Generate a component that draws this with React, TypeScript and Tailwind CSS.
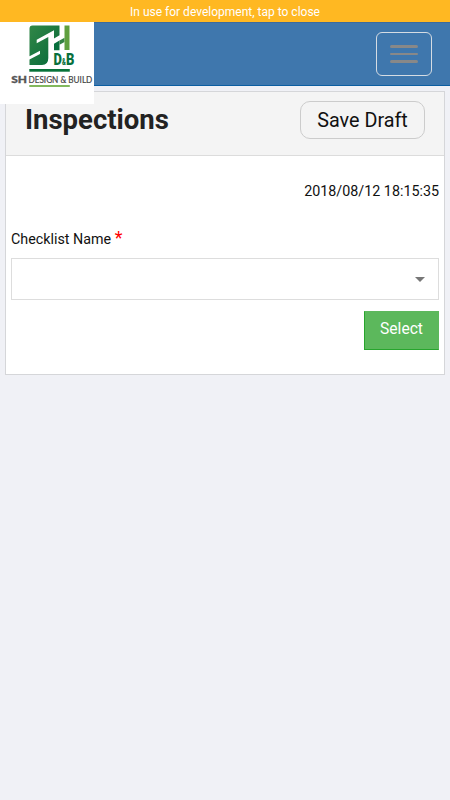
type FieldLabelProps = {
  text: string;
  required?: boolean;
};

function Logo() {
  return (
    <svg
      className="absolute -top-px left-0 z-10 h-[82px] w-[94px] overflow-visible bg-white"
      viewBox="0 22 94 82"
      role="img"
      aria-label="SH Design & Build"
    >
      <defs>
        <linearGradient id="mark" x1="0" y1="0" x2="1" y2="1">
          <stop offset="0" stopColor="#328747" />
          <stop offset="1" stopColor="#056839" />
        </linearGradient>
      </defs>
      <path
        d="M32.5 25.5H59.5V35.3L54 38.5V30.3L36.7 39.7V43.2L48.3 37V58Q48.3 65 42 65H29.5V59.5L40 54V50.8L29.5 56.3V28.5Q29.5 25.5 32.5 25.5Z"
        fill="url(#mark)"
      />
      <path d="M54 43.8L59.5 40.6V50.3H54Z" fill="#08703d" />
      <path d="M59.5 40.6L64.5 37.8V42L59.5 44.8Z" fill="#338143" />
      <path d="M64.5 25.5H69.5V50H64.5Z" fill="#5f9f3f" />
      <g fill="#08703d" fontFamily="Roboto, sans-serif" fontWeight="900">
        <text
          x="53.5"
          y="64.6"
          fontSize="16.5"
          textLength="8.4"
          lengthAdjust="spacingAndGlyphs"
        >
          D
        </text>
        <text
          x="62"
          y="64.6"
          fontSize="8.5"
          textLength="3.9"
          lengthAdjust="spacingAndGlyphs"
        >
          &amp;
        </text>
        <text
          x="66"
          y="64.6"
          fontSize="16.5"
          textLength="8.4"
          lengthAdjust="spacingAndGlyphs"
        >
          B
        </text>
      </g>
      <rect x="29.3" y="69" width="40.5" height="2.7" fill="#087339" />
      <rect x="29.3" y="85" width="40.5" height="2" fill="#82b85d" />
      <text
        x="11.3"
        y="82.6"
        fontFamily="Lato, sans-serif"
        fontSize="9.8"
        fontWeight="900"
        textLength="15.8"
        lengthAdjust="spacingAndGlyphs"
        fill="#555"
        stroke="#555"
        strokeWidth="0.3"
      >
        SH
      </text>
      <text
        x="28.5"
        y="82.6"
        fontFamily="Lato, sans-serif"
        fontSize="9.8"
        textLength="63.8"
        lengthAdjust="spacingAndGlyphs"
        fill="#444"
        stroke="#444"
        strokeWidth="0.2"
      >
        DESIGN &amp; BUILD
      </text>
    </svg>
  );
}

function FieldLabel({ text, required }: FieldLabelProps) {
  return (
    <label className="block h-6 text-[14.3px] leading-6 text-[#111]">
      {text}{" "}
      {required ? <span className="text-[18px] leading-none text-[#f00]">*</span> : null}
    </label>
  );
}

export default function App() {
  return (
    <div className="min-h-screen bg-[#f0f1f6] font-[Roboto,sans-serif] text-[#111]">
      <button
        className="block h-[22px] w-full bg-[#ffb822] pt-[2px] text-center text-[12px] leading-5 text-white"
        type="button"
      >
        In use for development, tap to close
      </button>

      <header className="relative flex h-16 items-start justify-end border-b border-t border-b-[#0b5ea2] border-t-[#3c6b9d] bg-[#3f77ad] pr-[18px] pt-[9px]">
        <Logo />
        <button
          className="flex h-[44px] w-[56px] flex-col items-center justify-center gap-[5px] rounded-[6px] border-[1.5px] border-[#d5dce3]"
          type="button"
          aria-label="Menu"
        >
          <span className="h-[2.5px] w-7 rounded-sm bg-[#888]" />
          <span className="h-[2.5px] w-7 rounded-sm bg-[#888]" />
          <span className="h-[2.5px] w-7 rounded-sm bg-[#888]" />
        </button>
      </header>

      <section className="mx-[5px] mt-[5px] h-[284px] border border-[#d5d6d9] bg-white">
        <div className="flex h-16 items-start justify-between border-b border-[#dcdcdc] bg-[#f4f4f4] px-[19px]">
          <h1 className="pt-[8px] text-[27.5px] font-bold leading-10 text-[#222]">Inspections</h1>
          <button
            className="mt-[9px] h-[38px] w-[125px] rounded-[10px] border border-[#ccc] pt-px text-[19.8px] text-[#111]"
            type="button"
          >
            Save Draft
          </button>
        </div>

        <div className="px-[5px]">
          <p className="pt-[25px] text-right text-[14.3px] leading-5">2018/08/12 18:15:35</p>
          <div className="mt-[26px]">
            <FieldLabel text="Checklist Name" required />
          </div>
          <div
            className="mt-[7px] flex h-[42px] items-center justify-end border border-[#ddd] pr-[13px]"
            role="combobox"
          >
            <svg className="h-[5px] w-[10px]" viewBox="0 0 10 5">
              <path d="M0 0H10L5 5Z" fill="#777" />
            </svg>
          </div>
          <div className="mt-[11px] flex justify-end">
            <button
              className="h-[39px] w-[75px] border border-[#5cb85c] border-b-[#27a52d] border-l-[#27a52d] bg-[#5cb85c] pb-px text-[15.6px] text-white"
              type="button"
            >
              Select
            </button>
          </div>
        </div>
      </section>
    </div>
  );
}
